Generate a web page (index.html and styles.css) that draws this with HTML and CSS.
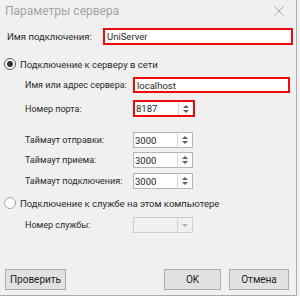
FILE: index.html
```html
<!DOCTYPE html>
<html>
<head>
<meta charset="utf-8">
<link rel="stylesheet" href="styles.css">
</head>
<body>
<div class="dialog">
  <div class="titlebar">
    <span class="title">Параметры сервера</span>
    <svg class="close" width="10" height="10" viewBox="0 0 10 10"><path d="M0.5 0.5 L9.5 9.5 M9.5 0.5 L0.5 9.5" stroke="#a8a8a8" stroke-width="1" fill="none"/></svg>
  </div>
  <div class="body">
    <div class="row row-name">
      <span class="label name-label">Имя подключения:</span>
      <div class="input red wide"><span>UniServer</span></div>
    </div>

    <div class="radio-row r1">
      <span class="radio checked"></span>
      <span class="label">Подключение к серверу в сети</span>
    </div>

    <div class="fields">
      <div class="field f-server">
        <span class="label">Имя или адрес сервера:</span>
        <div class="input red server"><span>localhost</span></div>
      </div>
      <div class="field f-port">
        <span class="label">Номер порта:</span>
        <div class="spin red port"><span class="val">8187</span><span class="arrows"><i class="up"></i><i class="down"></i></span></div>
      </div>
      <div class="field f-t1">
        <span class="label">Таймаут отправки:</span>
        <div class="spin"><span class="val">3000</span><span class="arrows"><i class="up"></i><i class="down"></i></span></div>
      </div>
      <div class="field f-t2">
        <span class="label">Таймаут приема:</span>
        <div class="spin"><span class="val">3000</span><span class="arrows"><i class="up"></i><i class="down"></i></span></div>
      </div>
      <div class="field f-t3">
        <span class="label">Таймаут подключения:</span>
        <div class="spin"><span class="val">3000</span><span class="arrows"><i class="up"></i><i class="down"></i></span></div>
      </div>
    </div>

    <div class="radio-row r2">
      <span class="radio"></span>
      <span class="label">Подключение к службе на этом компьютере</span>
    </div>

    <div class="fields">
      <div class="field f-svc">
        <span class="label">Номер службы:</span>
        <div class="combo"><span class="val"></span><span class="drop"><i class="down"></i></span></div>
      </div>
    </div>

    <div class="buttons">
      <button class="btn check">Проверить</button>
      <div class="spacer"></div>
      <button class="btn ok">OK</button>
      <button class="btn cancel">Отмена</button>
    </div>
  </div>
</div>
</body>
</html>
```

FILE: styles.css
```css
html, body {
  margin: 0;
  padding: 0;
  background: #f0f0f0;
}
body {
  width: 300px;
  height: 296px;
  overflow: hidden;
  font-family: Roboto, "Noto Sans", sans-serif;
  font-size: 9px;
  color: #2a2a2a;
}
.label {
  white-space: nowrap;
  flex-shrink: 0;
}
.dialog {
  width: 296px;
  height: 295px;
  border-right: 1px solid #aaaaaa;
  border-bottom: 1px solid #aaaaaa;
}
.titlebar {
  height: 21px;
  display: flex;
  align-items: center;
  justify-content: space-between;
  padding: 0 12px 0 5px;
}
.title {
  color: #a3a3a3;
  font-size: 12px;
}
.body {
  display: flex;
  flex-direction: column;
}
.row {
  display: flex;
  align-items: center;
}
.row-name {
  margin-top: 7px;
  height: 17px;
}
.name-label {
  width: 96px;
  padding-left: 7px;
  font-size: 9.5px;
}
.input {
  box-sizing: border-box;
  background: #fff;
  display: flex;
  align-items: center;
  padding-left: 2px;
  white-space: nowrap;
  font-size: 9.5px;
}
.red {
  border: 2px solid #ee0a0a;
}
.wide {
  width: 190px;
  height: 17px;
}
.radio-row {
  display: flex;
  align-items: center;
  padding-left: 4px;
  height: 14px;
  font-size: 9.5px;
}
.r1 { margin-top: 12px; }
.r2 { margin-top: 7px; }
.radio {
  box-sizing: border-box;
  width: 12px;
  height: 12px;
  border-radius: 50%;
  border: 1px solid #a0a0a0;
  background: #fff;
  margin-right: 4px;
  display: flex;
  align-items: center;
  justify-content: center;
}
.radio.checked {
  border-color: #555;
}
.radio.checked::after {
  content: "";
  width: 6px;
  height: 6px;
  border-radius: 50%;
  background: #333;
}
.fields {
  display: flex;
  flex-direction: column;
}
.field {
  display: flex;
  align-items: center;
  padding-left: 25px;
}
.field .label {
  width: 108px;
}
.f-server { margin-top: 6px; height: 16px; }
.f-port { margin-top: 7px; height: 17px; }
.f-t1 { margin-top: 15px; height: 16px; }
.f-t2 { margin-top: 4px; height: 16px; }
.f-t3 { margin-top: 5px; height: 16px; }
.f-svc { margin-top: 7px; height: 16px; }
.server {
  width: 157px;
  height: 16px;
}
.spin, .combo {
  box-sizing: border-box;
  width: 60px;
  height: 16px;
  border: 1px solid #b4b4b4;
  background: #fff;
  display: flex;
  font-size: 9.5px;
}
.spin.port {
  width: 62px;
  height: 17px;
  border: 2px solid #ee0a0a;
}
.val {
  flex: 1;
  display: flex;
  align-items: center;
  padding-left: 1px;
  color: #222;
}
.arrows, .drop {
  width: 14px;
  border-left: 1px solid #d4d4d4;
  display: flex;
  flex-direction: column;
  align-items: center;
  justify-content: center;
  gap: 2px;
}
.up {
  width: 0;
  height: 0;
  border-left: 3px solid transparent;
  border-right: 3px solid transparent;
  border-bottom: 3px solid #606060;
}
.down {
  width: 0;
  height: 0;
  border-left: 3px solid transparent;
  border-right: 3px solid transparent;
  border-top: 3px solid #606060;
}
.combo {
  background: #f0f0f0;
  border-color: #cccccc;
}
.combo .down {
  border-top-color: #b0b0b0;
}
.buttons {
  display: flex;
  align-items: center;
  margin-top: 36px;
  padding: 0 7px 0 5px;
  gap: 8px;
}
.spacer { flex: 1; }
.btn {
  font-family: Roboto, "Noto Sans", sans-serif;
  font-size: 10px;
  color: #222;
  height: 21px;
  border: 1px solid #adadad;
  background: #e1e1e1;
  padding: 0;
  margin: 0;
}
.check { width: 61px; }
.ok { width: 57px; }
.cancel { width: 60px; }
```
